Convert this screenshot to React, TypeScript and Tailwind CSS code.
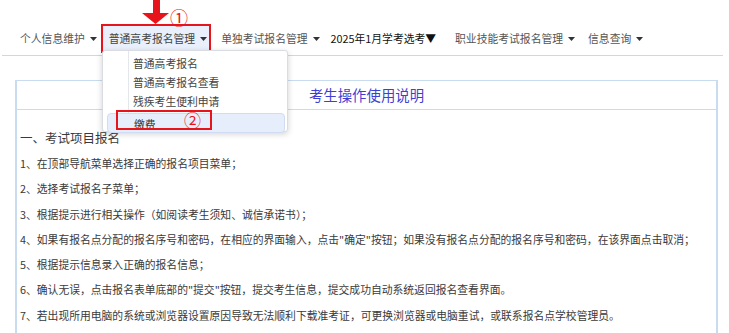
import React from 'react'

const Caret = () => (
  <svg width="7" height="4" viewBox="0 0 7 4" className="ml-[5px] shrink-0">
    <polygon points="0,0 7,0 3.5,4" fill="#333" />
  </svg>
)

const steps = [
  '1、在顶部导航菜单选择正确的报名项目菜单；',
  '2、选择考试报名子菜单；',
  '3、根据提示进行相关操作（如阅读考生须知、诚信承诺书）；',
  '4、如果有报名点分配的报名序号和密码，在相应的界面输入，点击"确定"按钮；如果没有报名点分配的报名序号和密码，在该界面点击取消；',
  '5、根据提示信息录入正确的报名信息；',
  '6、确认无误，点击报名表单底部的"提交"按钮，提交考生信息，提交成功自动系统返回报名查看界面。',
  '7、若出现所用电脑的系统或浏览器设置原因导致无法顺利下载准考证，可更换浏览器或电脑重试，或联系报名点学校管理员。',
]

export default function App() {
  return (
    <div className="relative w-[729px] h-[333px] overflow-hidden bg-white font-['Noto_Sans_CJK_SC',sans-serif] text-[10.8px] text-[#555]">
      {/* top nav */}
      <div className="flex items-start h-[56px] pt-[24px] pl-[20px] mx-[2px] mr-[6px] border-b border-[#c9d9ea]">
        <div className="flex items-center h-[29px] -ml-[2px]">
          <span>个人信息维护</span>
          <Caret />
        </div>
        <div className="relative flex items-center h-[29px] ml-[4px] pl-[6px] pr-[2px] border-2 border-[#e8141b] bg-[#e9f0fb] text-[#444]">
          <span>普通高考报名管理</span>
          <Caret />
        </div>
        <div className="flex items-center h-[29px] ml-[10px]">
          <span>单独考试报名管理</span>
          <Caret />
        </div>
        <div className="flex items-center h-[29px] ml-[11px] text-[#111]">
          <span>2025年1月学考选考▼</span>
        </div>
        <div className="flex items-center h-[29px] ml-[19px]">
          <span>职业技能考试报名管理</span>
          <Caret />
        </div>
        <div className="flex items-center h-[29px] ml-[13px]">
          <span>信息查询</span>
          <Caret />
        </div>
      </div>

      {/* content panel */}
      <div className="mt-[24px] ml-[15px] w-[703px] h-[260px] border-x-2 border-t border-[#c9dcef]">
        <div className="h-[29px] flex items-center justify-center border-b border-[#c9dcef] text-[14.4px] text-[#3f3fd6]">
          考生操作使用说明
        </div>
        <div className="pl-[3px] pt-[15px] text-[#3a3a3a]">
          <div className="text-[12.5px] leading-[26px]">一、考试项目报名</div>
          {steps.map((s) => (
            <div key={s} className="leading-[25.3px] whitespace-nowrap">{s}</div>
          ))}
        </div>
      </div>

      {/* dropdown menu */}
      <div className="absolute left-[102px] top-[50px] w-[186px] h-[82px] bg-white border border-[#d9dde3] rounded-[3px] shadow-[0_2px_6px_rgba(0,0,0,0.18)] pt-[3px] text-[#444]">
        <div className="absolute left-[25px] top-0 bottom-0 w-px bg-[#e3e6ea]" />
        <div className="relative h-[19px] leading-[19px] pl-[30px]">普通高考报名</div>
        <div className="relative h-[19px] leading-[19px] pl-[30px]">普通高考报名查看</div>
        <div className="relative h-[19px] leading-[19px] pl-[30px]">残疾考生便利申请</div>
        <div className="relative mt-[1.5px] ml-[4px] mr-[2px] h-[20px] leading-[20px] pl-[26px] rounded-[4px] bg-[#e6eefb] border border-[#cfdcf3] text-[#333]">
          缴费
        </div>
      </div>

      {/* annotation: red box around 缴费 with ② */}
      <div className="absolute left-[116px] top-[110px] w-[96px] h-[20px] border-2 border-[#e8141b]" />
      <div className="absolute left-[184px] top-[111px] text-[17px] leading-[18px] text-[#e8141b]">②</div>

      {/* annotation: arrow and ① */}
      <svg className="absolute left-[140px] top-0" width="30" height="25" viewBox="0 0 30 25">
        <rect x="13" y="0" width="7" height="14" fill="#e8141b" />
        <polygon points="2,13 29,13 15.5,24" fill="#e8141b" />
      </svg>
      <div className="absolute left-[170px] top-[8px] text-[18px] leading-[18px] text-[#e8141b]">①</div>
    </div>
  )
}
